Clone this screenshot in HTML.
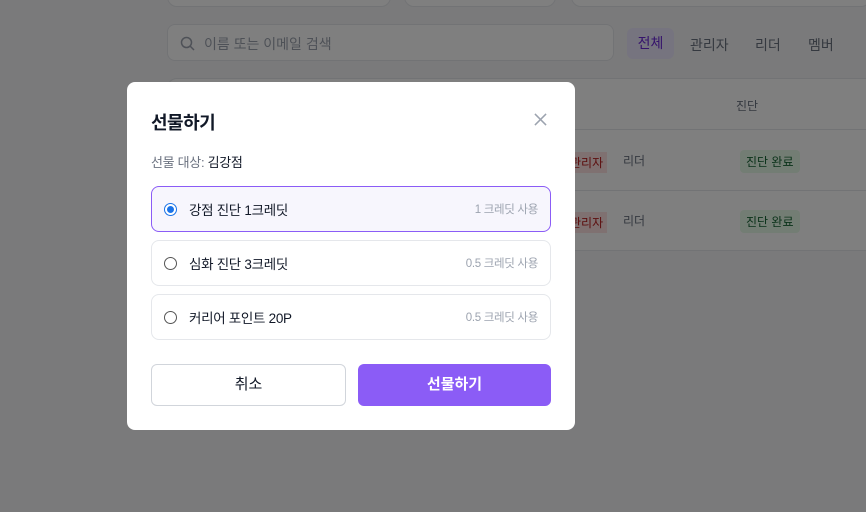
<!DOCTYPE html>
<html><head><meta charset="utf-8"><style>
*{box-sizing:border-box;margin:0;padding:0}
body{width:866px;height:512px;overflow:hidden;background:#f5f5f6;font-family:"Liberation Sans","Noto Sans CJK KR",sans-serif;position:relative}
.a{position:absolute}
.card{background:#fff;border:1px solid #e5e7eb;border-radius:10px}
.ov{position:absolute;inset:0;background:rgba(0,0,0,0.5)}
.opt{position:absolute;left:24px;width:400px;height:46px;border:1px solid #e5e7eb;border-radius:8px;display:flex;align-items:center;padding:0 12px;font-size:13.5px;color:#111827;letter-spacing:-0.3px}
.opt .r{width:13px;height:13px;border:1px solid #555;border-radius:50%;margin-right:12px}
.opt .s{margin-left:auto;font-size:11.5px;color:#9ca3af;letter-spacing:-0.3px}
</style></head><body>
<div class="a card" style="left:167px;top:-20px;width:224px;height:27px"></div>
<div class="a card" style="left:404px;top:-20px;width:152px;height:27px"></div>
<div class="a card" style="left:571px;top:-20px;width:300px;height:27px"></div>
<div class="a card" style="left:167px;top:24px;width:447px;height:37px;border-radius:8px;font-size:14px;color:#9ca3af;padding:9px 0 0 36px">이름 또는 이메일 검색
<svg class="a" style="left:12px;top:11px" width="15" height="15" viewBox="0 0 15 15" fill="none" stroke="#9ca3af" stroke-width="1.5"><circle cx="6.5" cy="6.5" r="5"/><path d="M10 10l4 4"/></svg></div>
<div class="a" style="left:627px;top:28px;width:47px;height:31px;background:#ede9fe;border-radius:6px;color:#6d28d9;font-size:14px;text-align:center;line-height:31px">전체</div>
<div class="a" style="left:690px;top:35px;font-size:14px;color:#6b7280">관리자</div>
<div class="a" style="left:755px;top:35px;font-size:14px;color:#6b7280">리더</div>
<div class="a" style="left:808px;top:35px;font-size:14px;color:#6b7280">멤버</div>
<div class="a card" style="left:167px;top:78px;width:720px;height:173px;border-radius:10px;overflow:hidden">
<div class="a" style="left:0;top:50px;width:720px;border-top:1px solid #e5e7eb"></div>
<div class="a" style="left:0;top:111px;width:720px;border-top:1px solid #e5e7eb"></div>
<div class="a" style="left:568px;top:18px;font-size:12px;color:#6b7280">진단</div>
<div class="a" style="left:395px;top:18px;font-size:12px;color:#6b7280">할</div>
<div class="a" style="left:398px;top:73px;font-size:12px;color:#b91c1c;background:#fee2e2;padding:2px 4px">관리자</div>
<div class="a" style="left:455px;top:73px;font-size:12px;color:#6b7280">리더</div>
<div class="a" style="left:572px;top:71px;font-size:12px;color:#166534;background:#e7fbe9;padding:3px 6px;border-radius:4px">진단 완료</div>
<div class="a" style="left:398px;top:133px;font-size:12px;color:#b91c1c;background:#fee2e2;padding:2px 4px">관리자</div>
<div class="a" style="left:455px;top:133px;font-size:12px;color:#6b7280">리더</div>
<div class="a" style="left:572px;top:131px;font-size:12px;color:#166534;background:#e7fbe9;padding:3px 6px;border-radius:4px">진단 완료</div>
</div>
<div class="ov"></div>
<div class="a" style="left:127px;top:82px;width:448px;height:348px;background:#fff;border-radius:8px">
<div class="a" style="left:24px;top:27px;font-size:18px;font-weight:bold;color:#111827;letter-spacing:-0.5px">선물하기</div>
<svg class="a" style="left:407px;top:31px" width="13" height="13" viewBox="0 0 14 14" stroke="#9ca3af" stroke-width="1.6"><path d="M1 1l12 12M13 1L1 13"/></svg>
<div class="a" style="left:24px;top:70px;font-size:13px;color:#6b7280;letter-spacing:-0.3px">선물 대상: <span style="color:#111827">김강점</span></div>
<div class="opt" style="top:104px;background:#f7f6fd;border-color:#8b5cf6"><span class="r" style="border:1.5px solid #1a73e8;background:radial-gradient(circle,#1a73e8 0 3.2px,#fff 3.7px)"></span>강점 진단 1크레딧<span class="s">1 크레딧 사용</span></div>
<div class="opt" style="top:158px"><span class="r"></span>심화 진단 3크레딧<span class="s">0.5 크레딧 사용</span></div>
<div class="opt" style="top:212px"><span class="r"></span>커리어 포인트 20P<span class="s">0.5 크레딧 사용</span></div>
<div class="a" style="left:24px;top:282px;width:195px;height:42px;border:1px solid #d1d5db;border-radius:6px;text-align:center;line-height:40px;font-size:15px;color:#111827">취소</div>
<div class="a" style="left:231px;top:282px;width:193px;height:42px;background:#8b5cf6;border-radius:6px;text-align:center;line-height:42px;font-size:15px;color:#fff;font-weight:bold">선물하기</div>
</div>
</body></html>
